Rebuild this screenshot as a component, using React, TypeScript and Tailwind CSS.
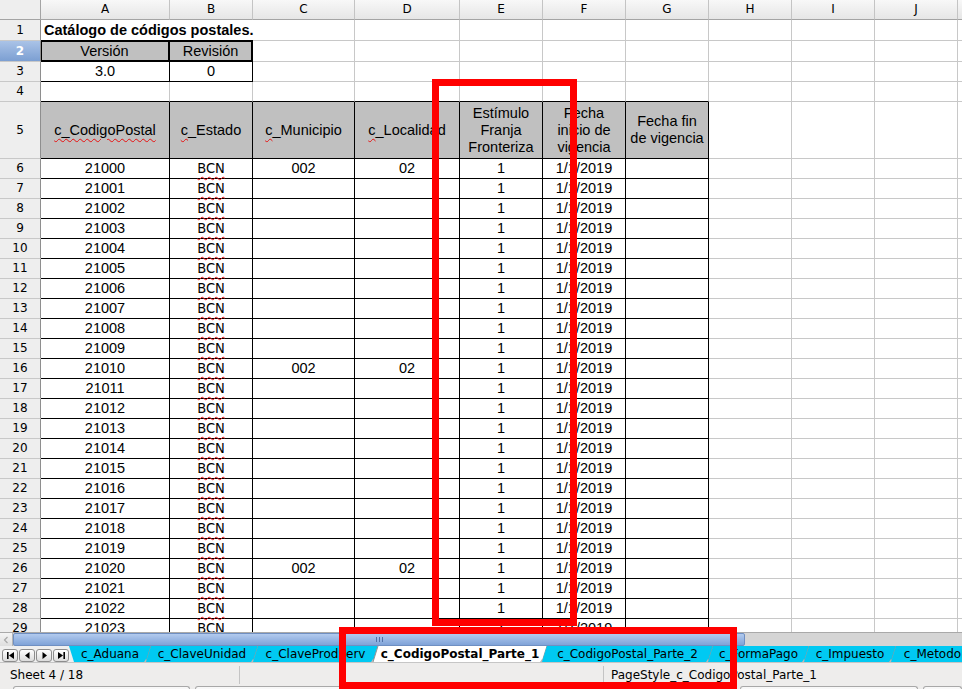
import clsx from "clsx";
import type { ReactNode } from "react";

const colW: Record<string, string> = {
  A: "w-[129px]",
  B: "w-[83px]",
  C: "w-[102px]",
  D: "w-[105px]",
  E: "w-[83px]",
  F: "w-[83px]",
  G: "w-[83px]",
  H: "w-[83px]",
  I: "w-[83px]",
  J: "w-[83px]",
  K: "w-[83px]",
};

const cols = ["A", "B", "C", "D", "E", "F", "G", "H", "I", "J", "K"];
const tableCols = ["A", "B", "C", "D", "E", "F", "G"];

const ui = "font-['DejaVu_Sans',sans-serif] text-[12px]";

function Squiggle({ children }: { children: ReactNode }) {
  return (
    <span className="underline decoration-wavy decoration-[#e81010] decoration-1 underline-offset-[3px]">
      {children}
    </span>
  );
}

function RowHead({ n, active }: { n: number; active?: boolean }) {
  return (
    <div
      className={clsx(
        "w-[41px] shrink-0 flex items-center justify-center border-r border-b border-r-[#8e8e8e] border-b-[#c8c8c8]",
        ui,
        active
          ? "bg-linear-to-b from-[#aac3e7] to-[#7c9fd2] text-white font-bold"
          : "bg-[#eeeeee] text-black"
      )}
    >
      {n}
    </div>
  );
}

function Cell({
  col,
  dark,
  darkB,
  className,
  children,
}: {
  col: string;
  dark?: boolean;
  darkB?: boolean;
  className?: string;
  children?: ReactNode;
}) {
  return (
    <div
      className={clsx(
        "shrink-0 flex items-center justify-center text-center border-r border-b",
        colW[col],
        dark ? "border-r-black" : "border-r-[#c8c8c8]",
        dark || darkB ? "border-b-black" : "border-b-[#c8c8c8]",
        className
      )}
    >
      {children}
    </div>
  );
}

function Row({
  n,
  h,
  active,
  children,
}: {
  n: number;
  h: string;
  active?: boolean;
  children: ReactNode;
}) {
  return (
    <div className={clsx("flex shrink-0", h)}>
      <RowHead n={n} active={active} />
      {children}
    </div>
  );
}

const dataRows = Array.from({ length: 24 }, (_, i) => ({
  n: i + 6,
  cp: String(21000 + i),
  mun: i % 10 === 0 ? "002" : "",
  loc: i % 10 === 0 ? "02" : "",
}));

function Grid() {
  return (
    <div className="h-[632px] shrink-0 overflow-hidden flex flex-col text-[14.5px] leading-[17px]">
      {/* column letters */}
      <div className={clsx("flex h-[20px] shrink-0", ui)}>
        <div className="w-[41px] shrink-0 border-r border-b border-[#a4a4a4] bg-[#eeeeee]" />
        {cols.map((c) => (
          <div
            key={c}
            className={clsx(
              "shrink-0 flex items-center justify-center border-r border-b border-r-[#c4c4c4] border-b-[#a4a4a4] bg-linear-to-b from-[#f8f8f8] to-[#e6e6e6]",
              colW[c]
            )}
          >
            {c}
          </div>
        ))}
      </div>

      <Row n={1} h="h-[21px]">
        <div className="w-[212px] shrink-0 flex items-center pl-[3px] font-bold whitespace-nowrap border-b border-black">
          Catálogo de códigos postales.
        </div>
        {cols.slice(2).map((c) => (
          <Cell key={c} col={c} />
        ))}
      </Row>

      <Row n={2} h="h-[21px]" active>
        <div className="w-[129px] shrink-0 flex items-center justify-center pt-px bg-[#c0c0c0] border-r-2 border-b-2 border-black shadow-[inset_1px_1px_0_#000]">
          Versión
        </div>
        <div className="w-[83px] shrink-0 flex items-center justify-center pt-px bg-[#c0c0c0] border-r-2 border-b-2 border-black shadow-[inset_0_1px_0_#000]">
          Revisión
        </div>
        {cols.slice(2).map((c) => (
          <Cell key={c} col={c} />
        ))}
      </Row>

      <Row n={3} h="h-[20px]">
        <Cell col="A" dark>
          3.0
        </Cell>
        <Cell col="B" dark>
          0
        </Cell>
        {cols.slice(2).map((c) => (
          <Cell key={c} col={c} />
        ))}
      </Row>

      <Row n={4} h="h-[20px]">
        {cols.map((c) => (
          <Cell key={c} col={c} darkB={tableCols.includes(c)} />
        ))}
      </Row>

      <Row n={5} h="h-[57px]">
        <Cell col="A" dark className="bg-[#c0c0c0] px-[3px]">
          <Squiggle>c_CodigoPostal</Squiggle>
        </Cell>
        <Cell col="B" dark className="bg-[#c0c0c0] px-[3px]">
          <span>
            <Squiggle>c</Squiggle>_Estado
          </span>
        </Cell>
        <Cell col="C" dark className="bg-[#c0c0c0] px-[3px]">
          <span>
            <Squiggle>c</Squiggle>_Municipio
          </span>
        </Cell>
        <Cell col="D" dark className="bg-[#c0c0c0] px-[3px]">
          <span>
            <Squiggle>c</Squiggle>_Localidad
          </span>
        </Cell>
        <Cell col="E" dark className="bg-[#c0c0c0] px-[3px]">
          Estímulo Franja Fronteriza
        </Cell>
        <Cell col="F" dark className="bg-[#c0c0c0] px-[3px]">
          Fecha inicio de vigencia
        </Cell>
        <Cell col="G" dark className="bg-[#c0c0c0] px-[3px]">
          Fecha fin de vigencia
        </Cell>
        {cols.slice(7).map((c) => (
          <Cell key={c} col={c} />
        ))}
      </Row>

      {dataRows.map((r) => (
        <Row key={r.n} n={r.n} h="h-[20px]">
          <Cell col="A" dark>
            {r.cp}
          </Cell>
          <Cell
            col="B"
            dark
            className="font-['Liberation_Sans_Narrow','DejaVu_Sans_Condensed',sans-serif] text-[14.5px]"
          >
            <Squiggle>BCN</Squiggle>
          </Cell>
          <Cell col="C" dark>
            {r.mun}
          </Cell>
          <Cell col="D" dark>
            {r.loc}
          </Cell>
          <Cell col="E" dark>
            1
          </Cell>
          <Cell col="F" dark>
            1/1/2019
          </Cell>
          <Cell col="G" dark />
          {cols.slice(7).map((c) => (
            <Cell key={c} col={c} />
          ))}
        </Row>
      ))}
    </div>
  );
}

function ScrollBar() {
  return (
    <div className="h-[14px] shrink-0 flex bg-[#d5d5d5] border-t border-[#a9a9a9]">
      <div className="w-[13px] shrink-0 flex items-center justify-center bg-linear-to-b from-[#f4f4f4] to-[#dedede] border-r border-[#b4b4b4]">
        <svg width="6" height="8" viewBox="0 0 6 8">
          <path d="M4.5 1 L1.5 4 L4.5 7" fill="none" stroke="#a8a8a8" strokeWidth="1.2" />
        </svg>
      </div>
      <div className="w-[732px] shrink-0 flex items-center justify-center bg-linear-to-b from-[#b2caee] to-[#7fa3d8] border border-[#6f8fc2] rounded-[2px]">
        <div className="flex gap-[2px]">
          <div className="w-px h-[5px] bg-[#4f70a6]" />
          <div className="w-px h-[5px] bg-[#4f70a6]" />
          <div className="w-px h-[5px] bg-[#4f70a6]" />
        </div>
      </div>
      <div className="flex-1" />
    </div>
  );
}

function NavButton({ children }: { children: ReactNode }) {
  return (
    <div className="w-[16px] h-[13px] shrink-0 flex items-center justify-center rounded-[3px] border border-[#8d8d8d] bg-linear-to-b from-[#ffffff] to-[#dcdcdc]">
      <svg width="9" height="9" viewBox="0 0 9 9" fill="#000">
        {children}
      </svg>
    </div>
  );
}

const tabs = [
  { name: "c_Aduana", cls: "w-[82px]", w: 82, first: true },
  { name: "c_ClaveUnidad", cls: "w-[112px]", w: 112 },
  { name: "c_ClaveProdServ", cls: "w-[125px]", w: 125 },
  { name: "c_CodigoPostal_Parte_1", cls: "w-[174px]", w: 174, active: true },
  { name: "c_CodigoPostal_Parte_2", cls: "w-[171px]", w: 171 },
  { name: "c_FormaPago", cls: "w-[101px]", w: 101 },
  { name: "c_Impuesto", cls: "w-[92px]", w: 92 },
  { name: "c_MetodoPago", cls: "w-[112px]", w: 112 },
];

function Tab({
  name,
  cls,
  w,
  first,
  active,
}: {
  name: string;
  cls: string;
  w: number;
  first?: boolean;
  active?: boolean;
}) {
  const pts = first
    ? `0,0 ${w},0 ${w - 5},16 5,16`
    : `5,0 ${w},0 ${w - 5},16 0,16`;
  return (
    <div className={clsx("relative shrink-0 h-[16px] -mr-[5px]", cls)}>
      <svg className="absolute inset-0" width={w} height={16} viewBox={`0 0 ${w} 16`}>
        <polygon points={pts} fill={active ? "#ffffff" : "#00c9f2"} />
        <line x1={w - 5} y1={16} x2={w} y2={0} stroke="#8a979c" strokeWidth="1" />
        <polygon points={`${w - 7},16 ${w - 5},13 ${w - 3},16`} fill="#b8b8b8" />
        {active && (
          <line x1={0} y1={16} x2={5} y2={0} stroke="#8a979c" strokeWidth="1" />
        )}
      </svg>
      <div
        className={clsx(
          "relative h-full flex items-center justify-center whitespace-nowrap text-black",
          active && "font-bold"
        )}
      >
        {name}
      </div>
    </div>
  );
}

function TabBar() {
  return (
    <div className={clsx("h-[16px] shrink-0 flex bg-[#efefef] overflow-hidden", ui)}>
      <div className="w-[69px] shrink-0 flex items-end gap-px pl-[2px]">
        <NavButton>
          <rect x="1" y="1" width="1.6" height="7" />
          <path d="M8 1 L3 4.5 L8 8 Z" />
        </NavButton>
        <NavButton>
          <path d="M6.5 1 L2 4.5 L6.5 8 Z" />
        </NavButton>
        <NavButton>
          <path d="M2.5 1 L7 4.5 L2.5 8 Z" />
        </NavButton>
        <NavButton>
          <path d="M1 1 L6 4.5 L1 8 Z" />
          <rect x="6.4" y="1" width="1.6" height="7" />
        </NavButton>
      </div>
      <div className="flex">
        {tabs.map((t) => (
          <Tab key={t.name} {...t} />
        ))}
      </div>
    </div>
  );
}

function StatusBar() {
  return (
    <div className={clsx("h-[27px] shrink-0 flex flex-col border-t border-[#c6c6c6] bg-[#eeedec] text-black", ui)}>
      <div className="h-[23px] flex items-center">
        <div className="w-[240px] h-[18px] flex items-center pl-[10px] border-r border-[#c4c4c4]">
          Sheet 4 / 18
        </div>
        <div className="w-[364px] h-[18px] border-r border-[#c4c4c4]" />
        <div className="pl-[7px] whitespace-nowrap">PageStyle_c_CodigoPostal_Parte_1</div>
      </div>
      <div className="h-[3px] flex gap-[5px] pl-[13px]">
        <div className="w-[179px] border-t border-x border-[#a8a8a8] rounded-t-[3px] bg-[#f8f8f8]" />
        <div className="w-[548px] border-t border-x border-[#a8a8a8] rounded-t-[3px] bg-[#f8f8f8]" />
        <div className="w-[180px] border-t border-x border-[#a8a8a8] rounded-t-[3px] bg-[#f8f8f8]" />
        <div className="w-[40px] border-t border-x border-[#a8a8a8] rounded-t-[3px] bg-[#f8f8f8]" />
      </div>
    </div>
  );
}

export default function App() {
  return (
    <div className="relative w-[962px] h-[689px] overflow-hidden bg-white flex flex-col font-['Liberation_Sans',Arial,sans-serif] text-black">
      <Grid />
      <ScrollBar />
      <TabBar />
      <StatusBar />
      <div className="absolute left-[432px] top-[79px] w-[145px] h-[547px] border-[7px] border-[#ff0000] pointer-events-none" />
      <div className="absolute left-[339px] top-[627px] w-[398px] h-[62px] border-[7px] border-[#ff0000] pointer-events-none" />
    </div>
  );
}
